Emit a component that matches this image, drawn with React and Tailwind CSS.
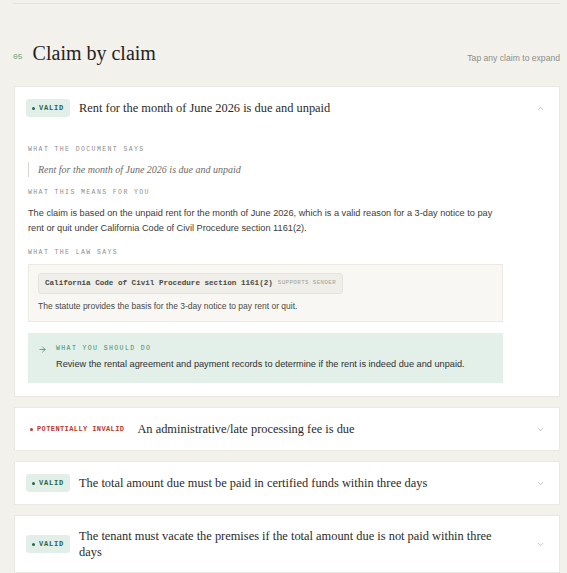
import { ChevronDown, ChevronUp, ArrowRight } from "lucide-react";

const serif = "font-['Liberation_Serif',serif]";
const mono = "font-['Liberation_Mono',monospace]";
const sans = "font-['Liberation_Sans',sans-serif]";

const claims = [
  { status: "valid", title: "Rent for the month of June 2026 is due and unpaid", open: true },
  { status: "invalid", title: "An administrative/late processing fee is due" },
  { status: "valid", title: "The total amount due must be paid in certified funds within three days" },
  { status: "valid", title: "The tenant must vacate the premises if the total amount due is not paid within three days" },
];

function Badge({ status }) {
  if (status === "invalid") {
    return (
      <span className={`${mono} flex h-[18px] shrink-0 items-center gap-[4px] px-[4px] text-[7px] font-bold tracking-[0.4px] text-[#c0392b]`}>
        <span className="h-[3px] w-[3px] rounded-full bg-[#c0392b]" />
        POTENTIALLY INVALID
      </span>
    );
  }
  return (
    <span className={`${mono} flex h-[18px] shrink-0 items-center gap-[4px] rounded-[3px] bg-[#e2efe8] px-[6px] text-[7px] font-bold tracking-[0.8px] text-[#276447]`}>
      <span className="h-[3px] w-[3px] rounded-full bg-[#276447]" />
      VALID
    </span>
  );
}

function Label({ children, className = "" }) {
  return (
    <p className={`${mono} text-[6.5px] leading-[10px] tracking-[1.4px] text-[#8f8e89] ${className}`}>{children}</p>
  );
}

function ClaimDetails() {
  return (
    <div className="pb-[13px] pl-[13px] pr-[56px]">
      <Label className="mt-[16px]">WHAT THE DOCUMENT SAYS</Label>
      <p className={`${serif} mt-[7px] border-l border-[#d8d5ce] py-[1px] pl-[9px] text-[10px] italic leading-[13px] text-[#6d6b66]`}>
        Rent for the month of June 2026 is due and unpaid
      </p>
      <Label className="mt-[11px]">WHAT THIS MEANS FOR YOU</Label>
      <p className={`${sans} mt-[8px] text-[9.2px] leading-[15px] text-[#3c3b38]`}>
        The claim is based on the unpaid rent for the month of June 2026, which is a valid reason for a 3-day notice to pay rent or quit under California Code of Civil Procedure section 1161(2).
      </p>
      <Label className="mt-[12px]">WHAT THE LAW SAYS</Label>
      <div className="mt-[6px] border border-[#ebe9e2] bg-[#f8f7f3] px-[9px] pb-[9px] pt-[8px]">
        <div className="flex h-[21px] w-fit items-center gap-[5px] rounded-[3px] border border-[#e6e4de] bg-[#efeee9] px-[6px]">
          <span className={`${mono} text-[7.6px] font-bold text-[#4a4945]`}>California Code of Civil Procedure section 1161(2)</span>
          <span className={`${mono} text-[5.8px] tracking-[0.4px] text-[#a3a29c]`}>SUPPORTS SENDER</span>
        </div>
        <p className={`${sans} mt-[6px] text-[8.5px] leading-[12px] text-[#4a4945]`}>
          The statute provides the basis for the 3-day notice to pay rent or quit.
        </p>
      </div>
      <div className="mt-[11px] flex gap-[9px] bg-[#e3f0ea] pb-[12px] pl-[10px] pr-[13px] pt-[11px]">
        <ArrowRight size={9} strokeWidth={2} className="mt-[1px] shrink-0 text-[#3f8a67]" />
        <div>
          <p className={`${mono} text-[6.5px] leading-[10px] tracking-[1.4px] text-[#3f8a67]`}>WHAT YOU SHOULD DO</p>
          <p className={`${sans} mt-[3px] text-[9.2px] leading-[14px] text-[#2f2e2b]`}>
            Review the rental agreement and payment records to determine if the rent is indeed due and unpaid.
          </p>
        </div>
      </div>
    </div>
  );
}

function ClaimCard({ claim }) {
  return (
    <div className="border border-[#ebe8e1] bg-white">
      <div className="flex items-center py-[12px] pl-[11px] pr-[14px]">
        <Badge status={claim.status} />
        <p className={`${serif} ml-[9px] mr-[30px] flex-1 text-[12.4px] leading-[16px] text-[#2b2a27]`}>{claim.title}</p>
        {claim.open ? (
          <ChevronUp size={9} strokeWidth={1.5} className="shrink-0 text-[#9d9c96]" />
        ) : (
          <ChevronDown size={9} strokeWidth={1.5} className="shrink-0 text-[#9d9c96]" />
        )}
      </div>
      {claim.open && <ClaimDetails />}
    </div>
  );
}

export default function App() {
  return (
    <div className="min-h-screen bg-[#f3f1ec] pl-[13px] pr-[7px] pt-[3px]">
      <div className="border-t border-[#e6e3dc]" />
      <div className="flex items-end justify-between pt-[36px]">
        <div className="flex items-end gap-[10px]">
          <span className={`${mono} mb-[3px] text-[8px] text-[#5d9f83]`}>05</span>
          <h2 className={`${serif} text-[20px] leading-[26px] text-[#23221f]`}>Claim by claim</h2>
        </div>
        <span className={`${sans} mb-[1px] text-[8.6px] text-[#8e8d88]`}>Tap any claim to expand</span>
      </div>
      <div className="mt-[20px] flex flex-col gap-[10px] pl-[1px]">
        {claims.map((c, i) => (
          <ClaimCard key={i} claim={c} />
        ))}
      </div>
    </div>
  );
}
